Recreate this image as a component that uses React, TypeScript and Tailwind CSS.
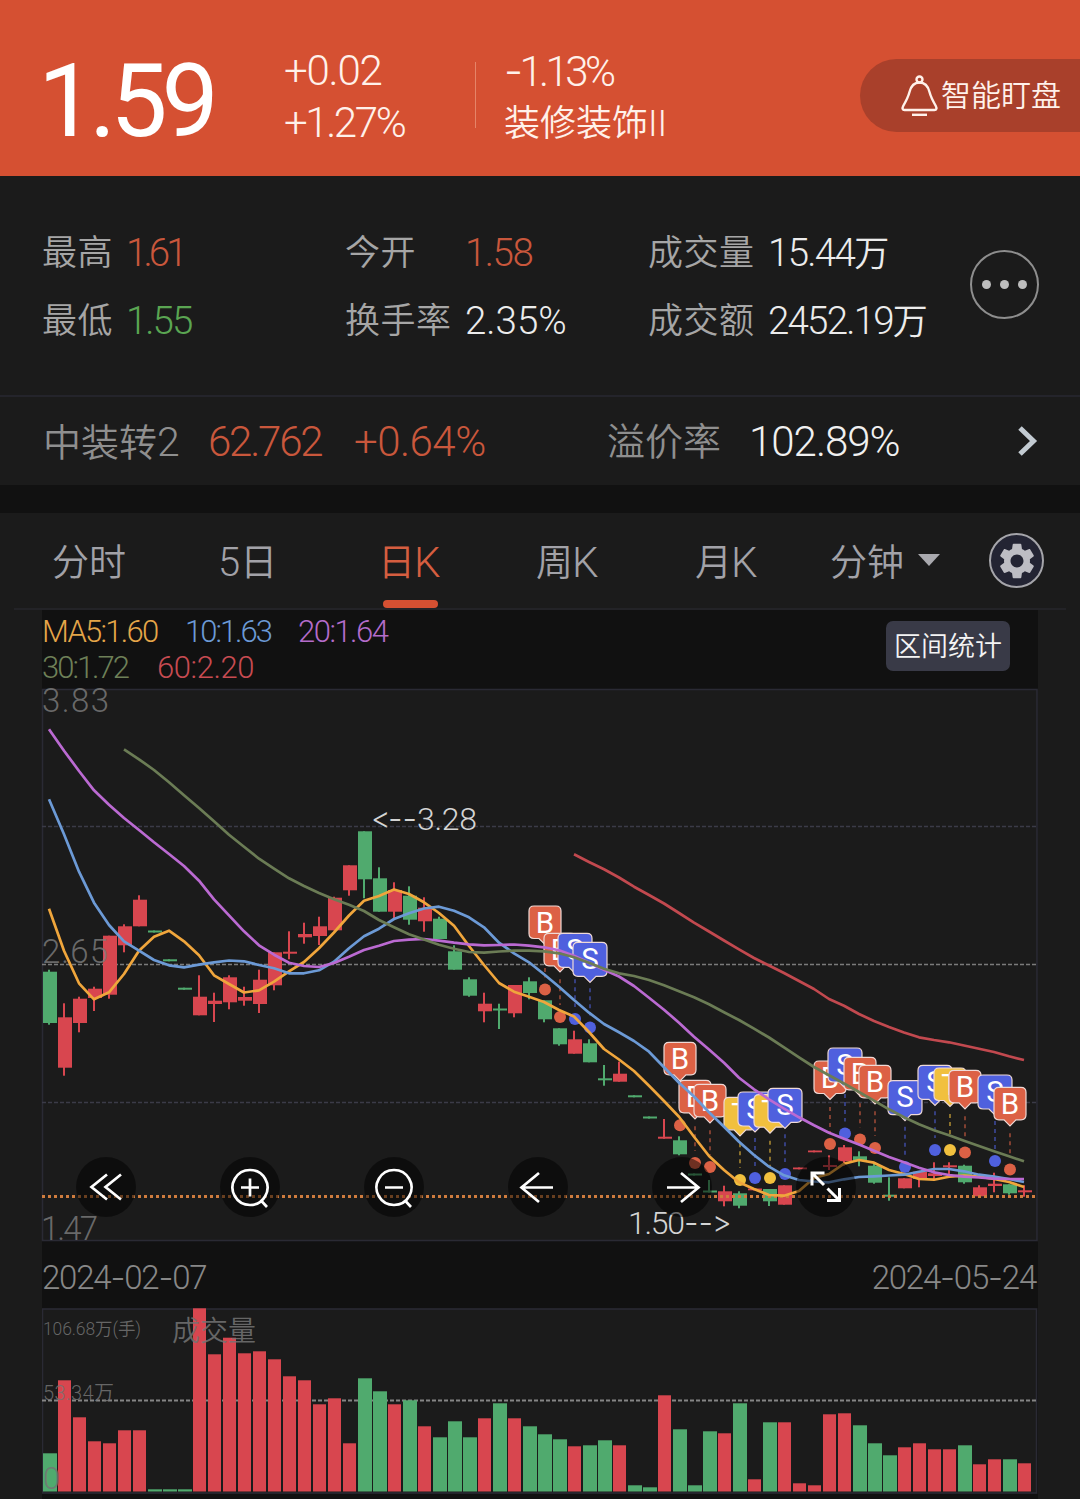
import type { ReactNode } from "react";

const UP = "#d8464f";
const DOWN = "#50aa6e";

const X0 = 49;
const STEP = 15;
const cx = (i: number) => X0 + i * STEP;

// [up?, body top, body bottom, wick top, wick bottom]
type Candle = [number, number, number, number, number];

const CANDLES: Candle[] = [
  [0, 971.7, 1023, 969.7, 1024.7],
  [1, 1017.3, 1067.7, 1003.3, 1075.7],
  [1, 998.7, 1023, 996.7, 1032.3],
  [1, 988.7, 998, 986.7, 1011],
  [1, 935.7, 994.7, 935.7, 998.7],
  [1, 926.3, 945.3, 924.3, 952.3],
  [1, 899.7, 926.3, 895.3, 926.3],
  [0, 930.5, 932.5, 930.5, 932.5],
  [0, 959.3, 961.3, 959.3, 961.3],
  [0, 987.7, 989.7, 987.7, 989.7],
  [1, 996.7, 1015.3, 975.3, 1015.3],
  [1, 1000.7, 1004, 992.7, 1022],
  [1, 977.3, 1002.3, 975.3, 1009.3],
  [1, 997, 1000.7, 986.7, 1005.7],
  [1, 979.7, 1004, 969.7, 1013],
  [1, 952.3, 985.3, 952.3, 990.3],
  [1, 951.7, 953.7, 931.3, 959.3],
  [1, 934, 937.3, 922.7, 943.7],
  [1, 926.3, 936, 916.7, 945],
  [1, 897.7, 930.3, 896.7, 930.3],
  [1, 865.3, 890.3, 865.3, 895.7],
  [0, 831.3, 879.3, 831.3, 898.3],
  [0, 878.3, 911.7, 867.3, 911.7],
  [1, 890, 911.7, 882.3, 918.3],
  [0, 895.7, 919.7, 886.3, 924.7],
  [1, 907.7, 921.3, 897.3, 931.7],
  [0, 918.7, 939, 916.7, 939],
  [0, 951.3, 969.7, 945.3, 969.7],
  [0, 979.3, 995.7, 977.3, 996.7],
  [1, 1003.7, 1011.3, 992.7, 1022.3],
  [0, 1008.5, 1010.5, 1003.7, 1029],
  [1, 985, 1013.3, 985, 1017.3],
  [0, 981.3, 993, 977.3, 999.3],
  [0, 1000.3, 1019.3, 1000.3, 1022.3],
  [0, 1028.3, 1044.3, 1028.3, 1045.7],
  [1, 1039.3, 1053.7, 1030.7, 1053.7],
  [0, 1043.3, 1062.3, 1039.3, 1062.3],
  [0, 1078.3, 1080.3, 1065, 1085.7],
  [1, 1073.7, 1081.7, 1061.7, 1081.7],
  [0, 1095.3, 1097.3, 1095.3, 1097.3],
  [0, 1116.5, 1118.5, 1116.5, 1118.5],
  [1, 1136.7, 1138.7, 1119, 1138.7],
  [0, 1140.3, 1154.3, 1136.3, 1155.3],
  [0, 1173.5, 1175.5, 1173.5, 1175.5],
  [0, 1190.5, 1192.5, 1180, 1192.5],
  [1, 1191.3, 1201.3, 1185.7, 1206.3],
  [0, 1193.3, 1205.7, 1191.3, 1208.3],
  [1, 1188.5, 1190.3, 1188.5, 1190.3],
  [0, 1189, 1201.3, 1189, 1206],
  [1, 1185.3, 1204.7, 1185.3, 1204.7],
  [1, 1167.5, 1169.3, 1167.5, 1169.3],
  [1, 1150.5, 1152.3, 1150.5, 1152.3],
  [1, 1165, 1167, 1155.3, 1170],
  [1, 1147.3, 1161.3, 1145, 1165.7],
  [0, 1156.3, 1160, 1151.3, 1166.3],
  [0, 1165.7, 1182.7, 1162.3, 1183.7],
  [0, 1194.7, 1196.7, 1177.3, 1200.7],
  [1, 1178.3, 1188.3, 1178.3, 1188.3],
  [1, 1171.7, 1179, 1171.7, 1187.3],
  [1, 1173.3, 1176, 1162.3, 1179],
  [1, 1165.3, 1167.3, 1162.3, 1176],
  [0, 1165.7, 1182.3, 1164.7, 1183.7],
  [1, 1187.3, 1196.3, 1185.3, 1196.3],
  [1, 1183.7, 1186, 1172.7, 1192.3],
  [0, 1184.3, 1193.3, 1184.3, 1194.7],
  [1, 1190.3, 1192.3, 1185.3, 1196.7],
];

// top edge of every volume bar
const VOLUMES = [
  1453.3, 1380.3, 1417.3, 1441.3, 1443.3, 1430.3, 1430.3, 1489.3, 1489.3, 1489.3, 1308.3,
  1354.3, 1337.7, 1353.3, 1351.3, 1359.3, 1376.3, 1380.3, 1404.3, 1398.3, 1443.3, 1378.3,
  1391.3, 1404.3, 1400.3, 1426.3, 1437.3, 1421.3, 1437.3, 1418.3, 1403.3, 1418.3, 1426.3,
  1434.3, 1439.3, 1446.3, 1445.3, 1440.3, 1445.3, 1485.3, 1487.3, 1395.3, 1429.3, 1485.3,
  1431.3, 1433.3, 1403.3, 1479.3, 1422.3, 1422.3, 1483.3, 1485.3, 1414.3, 1413.3, 1425.3,
  1443.3, 1455.3, 1447.3, 1443.3, 1449.3, 1449.3, 1445.3, 1464.3, 1459.3, 1459.3, 1463.3,
];

const MA5 = [
  908.7, 950.7, 983.3, 999.3, 992.3, 974, 950.7, 936.7, 930.7, 941.3, 955.3, 975.3, 984, 992.5,
  990.3, 981.7, 971.3, 962, 948.3, 932.5, 915.5, 900.7, 896, 889.5, 894, 902.3, 913, 925.7, 946,
  965, 983, 991.7, 996.7, 1002, 1010, 1016.5, 1032, 1049, 1059.5, 1071, 1085.7, 1101, 1116.7,
  1136.7, 1156, 1170, 1182.3, 1189, 1195, 1195.7, 1191, 1178, 1174, 1163.7, 1160, 1162.7, 1170,
  1174, 1179, 1179.7, 1176.7, 1175.7, 1176.7, 1179, 1182, 1187,
];
const MA10 = [
  799.3, 834.3, 871.7, 902.7, 925, 941.3, 950.7, 960, 965.3, 967.3, 964.7, 962.3, 960.5, 961.3,
  965, 968.3, 973.3, 973.3, 970.3, 961.7, 948.3, 936.3, 928.7, 919, 913.3, 908.5, 906.7, 910.7,
  917.3, 927.3, 942.7, 953.3, 962.3, 974.3, 986.7, 1000, 1012.7, 1024, 1032.3, 1041, 1051.7,
  1067.3, 1082.7, 1096.5, 1112.3, 1126.7, 1141.7, 1155, 1166.7, 1175.3, 1180, 1181.5, 1182.3,
  1179.3, 1177, 1176.3, 1175.5, 1174.7, 1171.7, 1169, 1169, 1171.3, 1174.7, 1176.7, 1179, 1182,
];
const MA20 = [
  729.3, 750.7, 771, 790.3, 804.7, 818, 830, 842.3, 854, 866, 880.7, 899.3, 915.3, 931.3, 945.3,
  954.7, 962.7, 966, 967, 963, 956.7, 950, 945.7, 941, 939.7, 939, 940.7, 942.7, 944.3, 945.3,
  945, 944.5, 945.7, 947.3, 950.3, 955.7, 962.7, 969.7, 976.5, 986, 997.7, 1009.7, 1022.7,
  1036.7, 1049.5, 1062.7, 1077.7, 1089.3, 1099.3, 1108.7, 1117.3, 1125.3, 1132.7, 1138.7,
  1144.5, 1150.7, 1157, 1162.3, 1167.7, 1172.3, 1175, 1176.7, 1177.5, 1178.7, 1179, 1179,
];
const MA30 = [
  749.3, 759.3, 770, 782.3, 795.3, 808, 821.3, 834.7, 846.7, 858.7, 868.7, 878.3, 886, 893, 899.3,
  904.7, 911, 920, 927.3, 934.3, 939.5, 944.7, 948.7, 952, 952.7, 951.5, 950.7, 950.7, 951.3,
  953.3, 957.3, 962.7, 968.7, 973.3, 976, 980, 985.3, 991.3, 997.3, 1004.3, 1012.3, 1020, 1028.7,
  1037.5, 1047.3, 1057.3, 1067, 1075.3, 1083.5, 1092, 1100.7, 1109.3, 1117.3, 1124.3, 1130.3,
  1135.3, 1140.7, 1146, 1151.3, 1156.3, 1161.3,
];
const MA60 = [
  854.3, 862, 869.3, 877.5, 886.7, 895, 903.5, 913, 922.7, 931.5, 940.5, 949.3, 958, 965.5, 973,
  981, 989, 999, 1005.7, 1014, 1021, 1027, 1032.5, 1037.3, 1040, 1042.3, 1045.5, 1048.7, 1052,
  1056.3, 1060,
];

const AVERAGES = [
  { color: "#f0a63c", from: 0, data: MA5 },
  { color: "#6c9ad6", from: 0, data: MA10 },
  { color: "#bb6ad2", from: 0, data: MA20 },
  { color: "#6b7c55", from: 5, data: MA30 },
  { color: "#c2494f", from: 35, data: MA60 },
];

type Kind = "B" | "S" | "T";

const KIND_COLOR: Record<Kind, string> = { B: "#dc6145", S: "#4f60de", T: "#f1c03e" };

// kind, x, bubble top, dot y
const TRADES: [Kind, number, number, number][] = [
  ["B", 545, 906, 989.5],
  ["B", 560, 933.3, 1017],
  ["S", 575, 933.3, 1019],
  ["S", 590, 942.3, 1027.5],
  ["B", 680, 1042.3, 1125.3],
  ["B", 695, 1080.3, 1163],
  ["B", 710, 1084.3, 1167],
  ["T", 740, 1097.3, 1180],
  ["S", 755, 1092, 1178],
  ["T", 770, 1094.7, 1178],
  ["S", 785, 1088.3, 1174],
  ["B", 830, 1061, 1144],
  ["S", 845, 1048, 1133.5],
  ["B", 860, 1057.3, 1139.5],
  ["B", 875, 1065.3, 1148],
  ["S", 905, 1080.7, 1167],
  ["S", 935, 1065.3, 1150],
  ["T", 950, 1068, 1150],
  ["B", 965, 1070.3, 1152.5],
  ["S", 995, 1075, 1161],
  ["B", 1010, 1087.3, 1169.5],
];

function Bubble({ kind, x, y }: { kind: Kind; x: number; y: number }) {
  const w = kind === "S" ? 17 : 16;
  const h = kind === "S" ? 34 : 32.5;
  const b = y + h;
  const d = `M${x - w + 5} ${y}H${x + w - 5}Q${x + w} ${y} ${x + w} ${y + 5}V${b - 5}Q${x + w} ${b} ${x + w - 5} ${b}H${x + 6}L${x} ${b + 6}L${x - 6} ${b}H${x - w + 5}Q${x - w} ${b} ${x - w} ${b - 5}V${y + 5}Q${x - w} ${y} ${x - w + 5} ${y}Z`;
  return (
    <g>
      <path d={d} fill={KIND_COLOR[kind]} stroke="#efd9d6" strokeWidth="1.2" />
      <text x={x} y={y + 26.5} textAnchor="middle" fontSize="29.5" fontWeight="400" fill="#fff">
        {kind}
      </text>
    </g>
  );
}

function PriceChart() {
  return (
    <svg className="block h-[552px] w-[996px] overflow-visible" viewBox="42 689 996 552">
      <rect x="42.5" y="689.5" width="994.5" height="551" fill="#1b1b1b" stroke="#2a2a34" strokeWidth="1.6" />
      <g strokeWidth="1.6" strokeDasharray="4 2">
        <path d="M42 826.5H1037M42 1102.5H1037" stroke="#3b3b47" />
        <path d="M42 964.5H1037" stroke="#7b7b7b" />
      </g>

      {CANDLES.map(([up, top, bottom, high, low], i) => (
        <g key={i} fill={up ? UP : DOWN}>
          <rect x={cx(i) - 6} y={top} width="14" height={bottom - top} />
          <rect x={cx(i) - 1} y={high} width="2" height={low - high} />
        </g>
      ))}

      <path d="M42 1196.5H1037" stroke="#cf7c3e" strokeWidth="3" strokeDasharray="3 3" />

      {TRADES.map(([kind, x, top, dot]) => (
        <g key={x}>
          <path
            d={`M${x} ${top + 46}V${dot - 12}`}
            stroke={KIND_COLOR[kind]}
            strokeWidth="1.3"
            strokeDasharray="4 4"
            opacity="0.8"
          />
          <circle cx={x} cy={dot} r="6" fill={KIND_COLOR[kind]} />
          <Bubble kind={kind} x={x} y={top} />
        </g>
      ))}

      {AVERAGES.map(({ color, from, data }) => (
        <polyline
          key={color}
          points={data.map((y, i) => `${cx(i + from)},${y}`).join(" ")}
          fill="none"
          stroke={color}
          strokeWidth="2.7"
          strokeLinejoin="round"
        />
      ))}

      <g fontSize="33" fill="#7f7f7f" fillOpacity="0.8">
        <text x="42" y="712" textLength="67">3.83</text>
        <text x="42" y="962.5" textLength="66">2.65</text>
        <text x="41" y="1240" textLength="57">1.47</text>
      </g>
      <g fontSize="32" fill="#d4d4d4">
        <text x="371" y="829" fontSize="30" className="font-['Inter']">&lt;</text>
        <text x="388" y="830" textLength="29" className="font-['Inter']">--</text>
        <text x="417" y="830" textLength="60">3.28</text>
        <text x="628" y="1234" textLength="57">1.50</text>
        <text x="684" y="1234" textLength="29" className="font-['Inter']">--</text>
        <text x="712" y="1233" fontSize="30" className="font-['Inter']">&gt;</text>
      </g>
    </svg>
  );
}

function VolumeChart() {
  return (
    <svg className="block h-[191px] w-[996px]" viewBox="42 1308 996 191">
      <rect x="42.5" y="1309" width="994" height="184" fill="#1b1b1b" stroke="#2a2a34" strokeWidth="1.6" />
      <path d="M42 1400.5H1037" stroke="#858585" strokeWidth="1.8" strokeDasharray="4 2" />
      {VOLUMES.map((top, i) => {
        const up = CANDLES[i][0];
        return (
          <rect
            key={i}
            x={cx(i) - 6}
            y={top}
            width={up ? 13 : 14}
            height={1491.5 - top}
            fill={up ? UP : DOWN}
          />
        );
      })}
      <g fill="#747474" fillOpacity="0.85">
        <text x="43" y="1335" fontSize="17.5" textLength="98">106.68万(手)</text>
        <text x="172" y="1341" fontSize="28" textLength="84">成交量</text>
        <text x="43" y="1400" fontSize="20" textLength="71">53.34万</text>
        <text x="43" y="1489" fontSize="31">0</text>
      </g>
    </svg>
  );
}

const TOOLS: ReactNode[] = [
  <path key="first" d="M31 17.500L15.500 30L31 42.500M45 17.500L29.500 30L45 42.500" />,
  <path key="in" d="M30 13a17.500 17.500 0 1 0 .01 0M41 43.500L47 50M21 30.500H39M30 21.500V39.500" />,
  <path key="out" d="M30 13a17.500 17.500 0 1 0 .01 0M41 43.500L47 50M21 30.500H39" />,
  <path key="left" d="M45 30.500H13M31 16L13.500 30.500L31 45" />,
  <path key="right" d="M15 30.500H47M29 16L46.500 30.500L29 45" />,
  <path key="expand" strokeWidth="3" d="M28 28L16 16M28.500 16H16V28.500M31.500 31.500L43.500 43.500M43.500 31V43.500H31" />,
];

function ChartTools() {
  return (
    <div className="absolute top-[468px] left-[33.500px] flex gap-[84px]">
      {TOOLS.map((icon, i) => (
        <button key={i} className="size-[60px] rounded-full bg-black/50">
          <svg viewBox="0 0 60 60" className="size-[60px]" fill="none" stroke="#fff" strokeWidth="2.7">
            {icon}
          </svg>
        </button>
      ))}
    </div>
  );
}

function Stat({ label, value, tone, gap }: { label: string; value: ReactNode; tone: string; gap: string }) {
  return (
    <div className="flex h-[68px] items-center">
      <span className={`pt-[2px] text-[35px] tracking-[0.500px] text-[#a6a6a6] ${gap}`}>{label}</span>
      <span className={`pt-[2px] text-[38.500px] ${tone}`}>{value}</span>
    </div>
  );
}

const Wan = () => <span className="text-[35px]">万</span>;

const Dash = () => <span className="font-['Inter']">-</span>;

function Header() {
  return (
    <header className="flex h-[176px] bg-[#d55032] text-[#fff1ea]">
      <div className="w-[284px] pt-[50px] pl-[38px] text-[102px] font-[450] tracking-[-6px] text-white">1.59</div>
      <div className="flex w-[191px] flex-col gap-[10px] pt-[50px] text-[42px]">
        <span className="tracking-[-1.200px]">+0.02</span>
        <span className="tracking-[-2.400px]">+1.27%</span>
      </div>
      <div className="mt-[62px] h-[66px] w-px bg-[#e58468]" />
      <div className="flex w-[384px] flex-col gap-[10px] pt-[50px] pl-[28px]">
        <span className="text-[42px] tracking-[-3.600px]">
          <Dash />1.13%
        </span>
        <span className="h-[41px] text-[36px] leading-[43px]">装修装饰II</span>
      </div>
      <button className="mt-[59px] flex h-[73px] w-[220px] items-center rounded-l-full bg-[#a9402b] pl-[40px]">
        <svg viewBox="0 0 38 42" className="h-[42px] w-[38px]" fill="none" stroke="#fff1ea" strokeWidth="2.400">
          <circle cx="19.500" cy="4.500" r="3" />
          <path d="M19.500 7.500C14 7.500 11 11 9.500 17C8.200 22 5.500 27 3.200 31C2 33.500 2.500 35 4.500 35H34.500C36.500 35 37 33.500 35.800 31C33.500 27 30.800 22 29.500 17C28 11 25 7.500 19.500 7.500Z" />
          <path d="M12 39.800H27" />
        </svg>
        <span className="ml-[3px] text-[30px]">智能盯盘</span>
      </button>
    </header>
  );
}

function Tabs() {
  const tab = "flex h-full items-center pt-[5px]";
  return (
    <nav className="mx-[14px] flex h-[97px] border-b-2 border-[#232327] text-[37px] text-[#a2a2a8]">
      <span className={`${tab} w-[165px] pl-[38px]`}>分时</span>
      <span className={`${tab} w-[158px] pl-[39px]`}>
        <span className="text-[40px]">5</span>日
      </span>
      <span className={`${tab} relative w-[159px] pl-[41px] text-[#d55e40]`}>
        日<span className="-ml-px text-[42px]">K</span>
        <i className="absolute bottom-0 left-[46px] h-[8px] w-[55px] rounded-full bg-[#d55032]" />
      </span>
      <span className={`${tab} w-[161px] pl-[40px]`}>
        周<span className="-ml-px text-[42px]">K</span>
      </span>
      <span className={`${tab} w-[159px] pl-[38px]`}>
        月<span className="-ml-px text-[42px]">K</span>
      </span>
      <span className={`${tab} w-[173px] pl-[14px]`}>
        分钟
        <svg viewBox="0 0 22 12" className="mb-[6px] ml-[14px] h-[12px] w-[22px]" fill="#a9a9ae">
          <path d="M0 0H22L11 12Z" />
        </svg>
      </span>
      <span className="mt-[20px] flex size-[55px] items-center justify-center rounded-full border-2 border-[#a5a5aa] bg-[#232433]">
        <svg viewBox="2 2 20 20" className="size-[36px]" fill="#bdbdc3">
          <path d="M19.140 12.940c.04-.3.06-.61.06-.94 0-.32-.02-.64-.07-.94l2.030-1.580c.18-.14.23-.41.12-.61l-1.920-3.320c-.12-.22-.37-.29-.59-.22l-2.390.96c-.5-.38-1.030-.7-1.620-.94l-.36-2.540c-.04-.24-.24-.41-.48-.41h-3.840c-.24 0-.43.17-.47.41l-.36 2.540c-.59.24-1.130.57-1.620.94l-2.390-.96c-.22-.08-.47 0-.59.22L2.740 8.870c-.12.21-.08.47.12.61l2.030 1.580c-.05.3-.09.63-.09.94s.02.64.07.94l-2.030 1.580c-.18.14-.23.41-.12.61l1.920 3.320c.12.22.37.29.59.22l2.390-.96c.5.38 1.030.7 1.620.94l.36 2.540c.05.24.24.41.48.41h3.840c.24 0 .44-.17.47-.41l.36-2.540c.59-.24 1.130-.56 1.620-.94l2.390.96c.22.08.47 0 .59-.22l1.920-3.320c.12-.22.07-.47-.12-.61l-2.010-1.580zM12 15.600c-1.980 0-3.600-1.620-3.600-3.600s1.620-3.600 3.600-3.600 3.600 1.620 3.600 3.600-1.620 3.600-3.600 3.600z" />
        </svg>
      </span>
    </nav>
  );
}

export default function App() {
  return (
    <div className="flex h-[1499px] w-[1080px] flex-col overflow-hidden bg-[#1b1b1b] font-['Roboto','Noto_Sans_CJK_SC',sans-serif] leading-none font-[350] whitespace-nowrap">
      <Header />

      <section className="flex h-[221px] border-b-2 border-[#24242b] pt-[42px] pl-[42px]">
        <div className="w-[303px]">
          <Stat label="最高" value="1.61" tone="text-[#c9573c] tracking-[-3.900px]" gap="w-[84px]" />
          <Stat label="最低" value="1.55" tone="text-[#5aa552] tracking-[-2px]" gap="w-[84px]" />
        </div>
        <div className="w-[303px]">
          <Stat label="今开" value="1.58" tone="text-[#c9573c] tracking-[-1.500px]" gap="w-[120px]" />
          <Stat label="换手率" value="2.35%" tone="text-[#ececec]" gap="w-[120px]" />
        </div>
        <div className="w-[322px]">
          <Stat label="成交量" value={<>15.44<Wan /></>} tone="text-[#ececec] tracking-[-1.700px]" gap="w-[120px]" />
          <Stat label="成交额" value={<>2452.19<Wan /></>} tone="text-[#ececec] tracking-[-1.800px]" gap="w-[120px]" />
        </div>
        <button className="mt-[32px] flex size-[69px] items-center justify-center gap-[9px] rounded-full border-2 border-[#8e8e8e]">
          <i className="size-[9px] rounded-full bg-[#bdbdbd]" />
          <i className="size-[9px] rounded-full bg-[#bdbdbd]" />
          <i className="size-[9px] rounded-full bg-[#bdbdbd]" />
        </button>
      </section>

      <section className="flex h-[88px] items-center pl-[43px] text-[42px] text-[#c9573c]">
        <span className="w-[165px] pt-[2px] text-[38px] text-[#8f8f8f]">
          中装转<span className="text-[41px]">2</span>
        </span>
        <span className="w-[146px] pt-[2px] tracking-[-2.200px]">62.762</span>
        <span className="w-[253px] pt-[2px] tracking-[-0.500px]">+0.64%</span>
        <span className="w-[142px] pt-[2px] text-[38px] text-[#8f8f8f]">溢价率</span>
        <span className="w-[269px] pt-[2px] tracking-[-1px] text-[#f0f0f0]">102.89%</span>
        <svg viewBox="0 0 20 30" className="h-[30px] w-[20px]" fill="none" stroke="#c3cbd2" strokeWidth="5">
          <path d="M2 2L15.500 15L2 28" />
        </svg>
      </section>

      <div className="h-[28px] bg-[#111]" />

      <Tabs />

      <main className="mx-[42px] flex w-[996px] flex-col bg-[#111]">
        <div className="flex h-[79px] justify-between text-[31px]">
          <div className="flex flex-col gap-[5px] pt-[6px]">
            <div className="flex">
              <span className="w-[143px] tracking-[-1.700px] text-[#e5a649]">MA5:1.60</span>
              <span className="w-[113px] tracking-[-2px] text-[#6c9ad6]">10:1.63</span>
              <span className="tracking-[-1.500px] text-[#b46cca]">20:1.64</span>
            </div>
            <div className="flex">
              <span className="w-[115px] tracking-[-2px] text-[#6e8058]">30:1.72</span>
              <span className="tracking-[-0.400px] text-[#c74b51]">60:2.20</span>
            </div>
          </div>
          <button className="mt-[11px] mr-[28px] flex h-[50px] w-[124px] items-center justify-center rounded-[7px] bg-[#393a47] pt-[2px] text-[27px] text-[#f4f4f4]">
            区间统计
          </button>
        </div>

        <div className="relative">
          <PriceChart />
          <ChartTools />
        </div>

        <div className="flex h-[67px] items-center justify-between pt-[5px] pr-[2px] text-[33px] tracking-[-1.200px] text-[#888]">
          <span>
            2024<Dash />02<Dash />07
          </span>
          <span>
            2024<Dash />05<Dash />24
          </span>
        </div>

        <VolumeChart />
      </main>
    </div>
  );
}
